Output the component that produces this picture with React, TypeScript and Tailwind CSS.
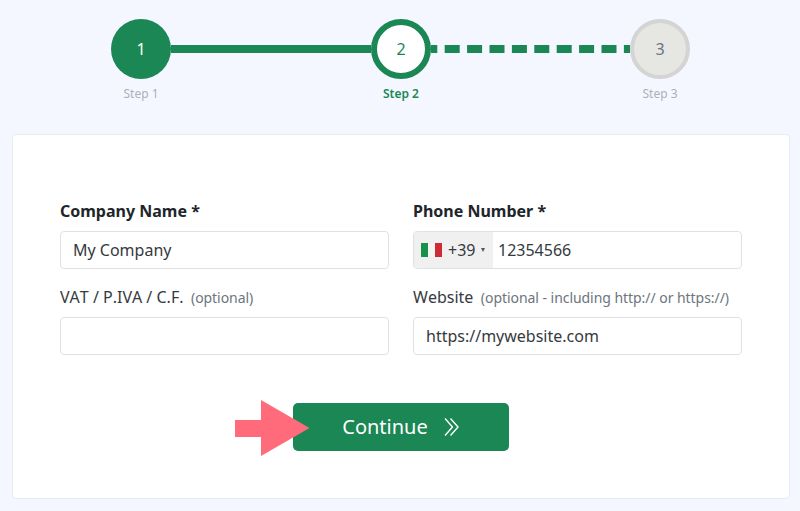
import React from 'react'

const GREEN = '#1a8754'

const Label = ({ text, hint, bold }: { text: string; hint?: string; bold?: boolean }) => (
  <div className="h-[24px] flex items-center mb-[8px] whitespace-nowrap">
    <span className={bold ? 'text-[16px] font-bold text-[#212529]' : 'text-[16px] text-[#343a40]'}>{text}</span>
    {hint && <span className="ml-[7.5px] text-[14px] tracking-[-0.05px] text-[#6c757d]">{hint}</span>}
  </div>
)

const Field = ({ value }: { value?: string }) => (
  <div className="h-[38px] flex items-center px-[12px] bg-white border border-[#dee2e6] rounded-[4px] text-[16px] text-[#343a40]">
    {value}
  </div>
)

const ItalyFlag = () => (
  <svg width="21" height="14" viewBox="0 0 21 14">
    <rect width="7" height="14" fill="#1a9048" />
    <rect x="7" width="7" height="14" fill="#f4f5f0" />
    <rect x="14" width="7" height="14" fill="#ce2b37" />
  </svg>
)

const Step = ({ n, label, state }: { n: number; label: string; state: 'done' | 'active' | 'todo' }) => {
  const circle =
    state === 'done'
      ? 'bg-[#1a8754] text-white'
      : state === 'active'
        ? 'bg-white border-[6px] border-[#1a8754] text-[#1a8754]'
        : 'bg-[#e6e6e3] border-[4px] border-[#d4d4d4] text-[#6c757d]'
  const text =
    state === 'active' ? 'text-[#1a8754] font-semibold' : 'text-[#adb0b6]'
  return (
    <div className="w-[60px] shrink-0 flex flex-col items-center">
      <div className={`w-[60px] h-[60px] rounded-full flex items-center justify-center text-[16px] ${circle}`}>{n}</div>
      <div className={`mt-[7px] text-[12px] leading-[16px] whitespace-nowrap ${text}`}>{label}</div>
    </div>
  )
}

export default function App() {
  return (
    <div className="h-[511px] overflow-hidden bg-[#f4f7ff] font-['Noto_Sans',sans-serif] [font-kerning:none]">
      {/* Stepper */}
      <div className="flex items-start pt-[19px] pl-[111px]">
        <Step n={1} label="Step 1" state="done" />
        <div className="w-[200px] h-[8px] mt-[26px] bg-[#1a8754]" />
        <Step n={2} label="Step 2" state="active" />
        <svg className="shrink-0 mt-[26px]" width="199" height="8">
          <line x1="0" y1="4" x2="199" y2="4" stroke={GREEN} strokeWidth="8" strokeDasharray="15 7.4" strokeDashoffset="8.7" />
        </svg>
        <Step n={3} label="Step 3" state="todo" />
      </div>

      {/* Card */}
      <div className="mt-[32px] mx-[12px] w-[778px] h-[365px] bg-white border border-[#e9ecef] rounded-[4px] px-[47px] pt-[64px]">
        <div className="grid grid-cols-2 gap-x-[24px] gap-y-[16px]">
          <div>
            <Label text="Company Name *" bold />
            <Field value="My Company" />
          </div>
          <div>
            <Label text="Phone Number *" bold />
            <div className="h-[38px] flex items-center bg-white border border-[#dee2e6] rounded-[4px] text-[16px] text-[#343a40] overflow-hidden">
              <div className="h-full w-[79px] shrink-0 bg-[#f0f0f0] flex items-center pl-[7px]">
                <ItalyFlag />
                <span className="ml-[6px]">+39</span>
                <span className="ml-[6px] w-0 h-0 border-x-[2.5px] border-x-transparent border-t-[4px] border-t-[#555]" />
              </div>
              <span className="ml-[5px]">12354566</span>
            </div>
          </div>
          <div>
            <Label text="VAT / P.IVA / C.F." hint="(optional)" />
            <Field />
          </div>
          <div>
            <Label text="Website" hint="(optional - including http:// or https://)" />
            <Field value="https://mywebsite.com" />
          </div>
        </div>

        {/* Continue */}
        <div className="relative mt-[48px] ml-[233px] w-[216px] h-[48px] bg-[#1a8754] rounded-[5px] flex items-center justify-center text-white text-[20px]">
          <span className="-ml-[1px]">Continue</span>
          <svg className="ml-[16px]" width="15" height="18" viewBox="0 0 15 18" fill="none" stroke="currentColor" strokeWidth="1.4">
            <path d="M1 0.5 8.5 9 1 17.5" />
            <path d="M6.5 0.5 14 9 6.5 17.5" />
          </svg>
          <svg className="absolute left-[-58px] top-[-3px]" width="75" height="56" viewBox="0 0 75 56">
            <polygon points="0,20 26,20 26,0 74.5,28 26,56 26,37 0,37" fill="#ff6b7a" />
          </svg>
        </div>
      </div>
    </div>
  )
}
